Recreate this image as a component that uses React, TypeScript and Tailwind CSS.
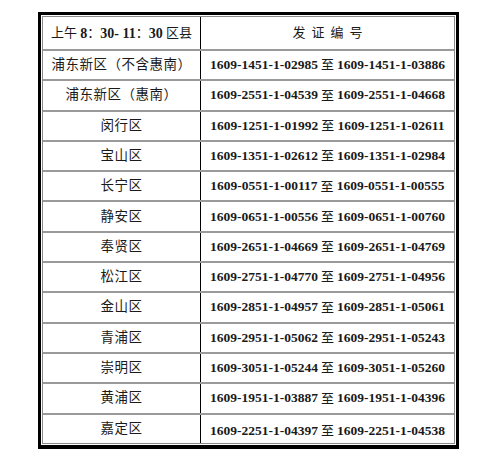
const rows: [string, string, string][] = [
  ['浦东新区（不含惠南）', '1609-1451-1-02985', '1609-1451-1-03886'],
  ['浦东新区（惠南）', '1609-2551-1-04539', '1609-2551-1-04668'],
  ['闵行区', '1609-1251-1-01992', '1609-1251-1-02611'],
  ['宝山区', '1609-1351-1-02612', '1609-1351-1-02984'],
  ['长宁区', '1609-0551-1-00117', '1609-0551-1-00555'],
  ['静安区', '1609-0651-1-00556', '1609-0651-1-00760'],
  ['奉贤区', '1609-2651-1-04669', '1609-2651-1-04769'],
  ['松江区', '1609-2751-1-04770', '1609-2751-1-04956'],
  ['金山区', '1609-2851-1-04957', '1609-2851-1-05061'],
  ['青浦区', '1609-2951-1-05062', '1609-2951-1-05243'],
  ['崇明区', '1609-3051-1-05244', '1609-3051-1-05260'],
  ['黄浦区', '1609-1951-1-03887', '1609-1951-1-04396'],
  ['嘉定区', '1609-2251-1-04397', '1609-2251-1-04538'],
]

const font = { fontFamily: '"Liberation Serif", "Noto Sans CJK SC", serif' }

export default function App() {
  return (
    <div className="w-[500px] h-[460px] bg-white pt-[12px] pl-[38px]" style={font}>
      <div className="w-[421px] border-[3px] border-b-[4px] border-black bg-white p-px">
        <div className="border border-[#8a8a8a] text-[#1a1a1a]">
          {/* header */}
          <div className="flex h-[32px]">
            <div className="w-[157px] flex items-center pl-[8px] text-[13px] whitespace-nowrap">
              上午&nbsp;<b className="font-bold text-[14px]">8</b>：<b className="font-bold text-[14px]">30- 11</b>：<b className="font-bold text-[14px]">30</b>&nbsp;区县
            </div>
            <div className="flex-1 border-l border-black flex items-center justify-center text-[13px] tracking-[6px] pl-[6px]">
              发证编号
            </div>
          </div>
          {rows.map(([area, from, to], i) => (
            <div key={area} className="flex h-[30.3px] border-t-2 border-[#9a9a9a]">
              <div className="w-[157px] flex items-center justify-center text-[13.5px] tracking-[0.5px] whitespace-nowrap">
                {area}
              </div>
              <div
                className={
                  'flex-1 border-l border-black flex justify-center text-[13.5px] whitespace-nowrap ' +
                  (i === rows.length - 1 ? 'items-end pb-[2px]' : 'items-center')
                }
              >
                <b className="font-bold">{from}</b>
                <span className="mx-[3px] text-[13px]">至</span>
                <b className="font-bold">{to}</b>
              </div>
            </div>
          ))}
        </div>
      </div>
    </div>
  )
}
